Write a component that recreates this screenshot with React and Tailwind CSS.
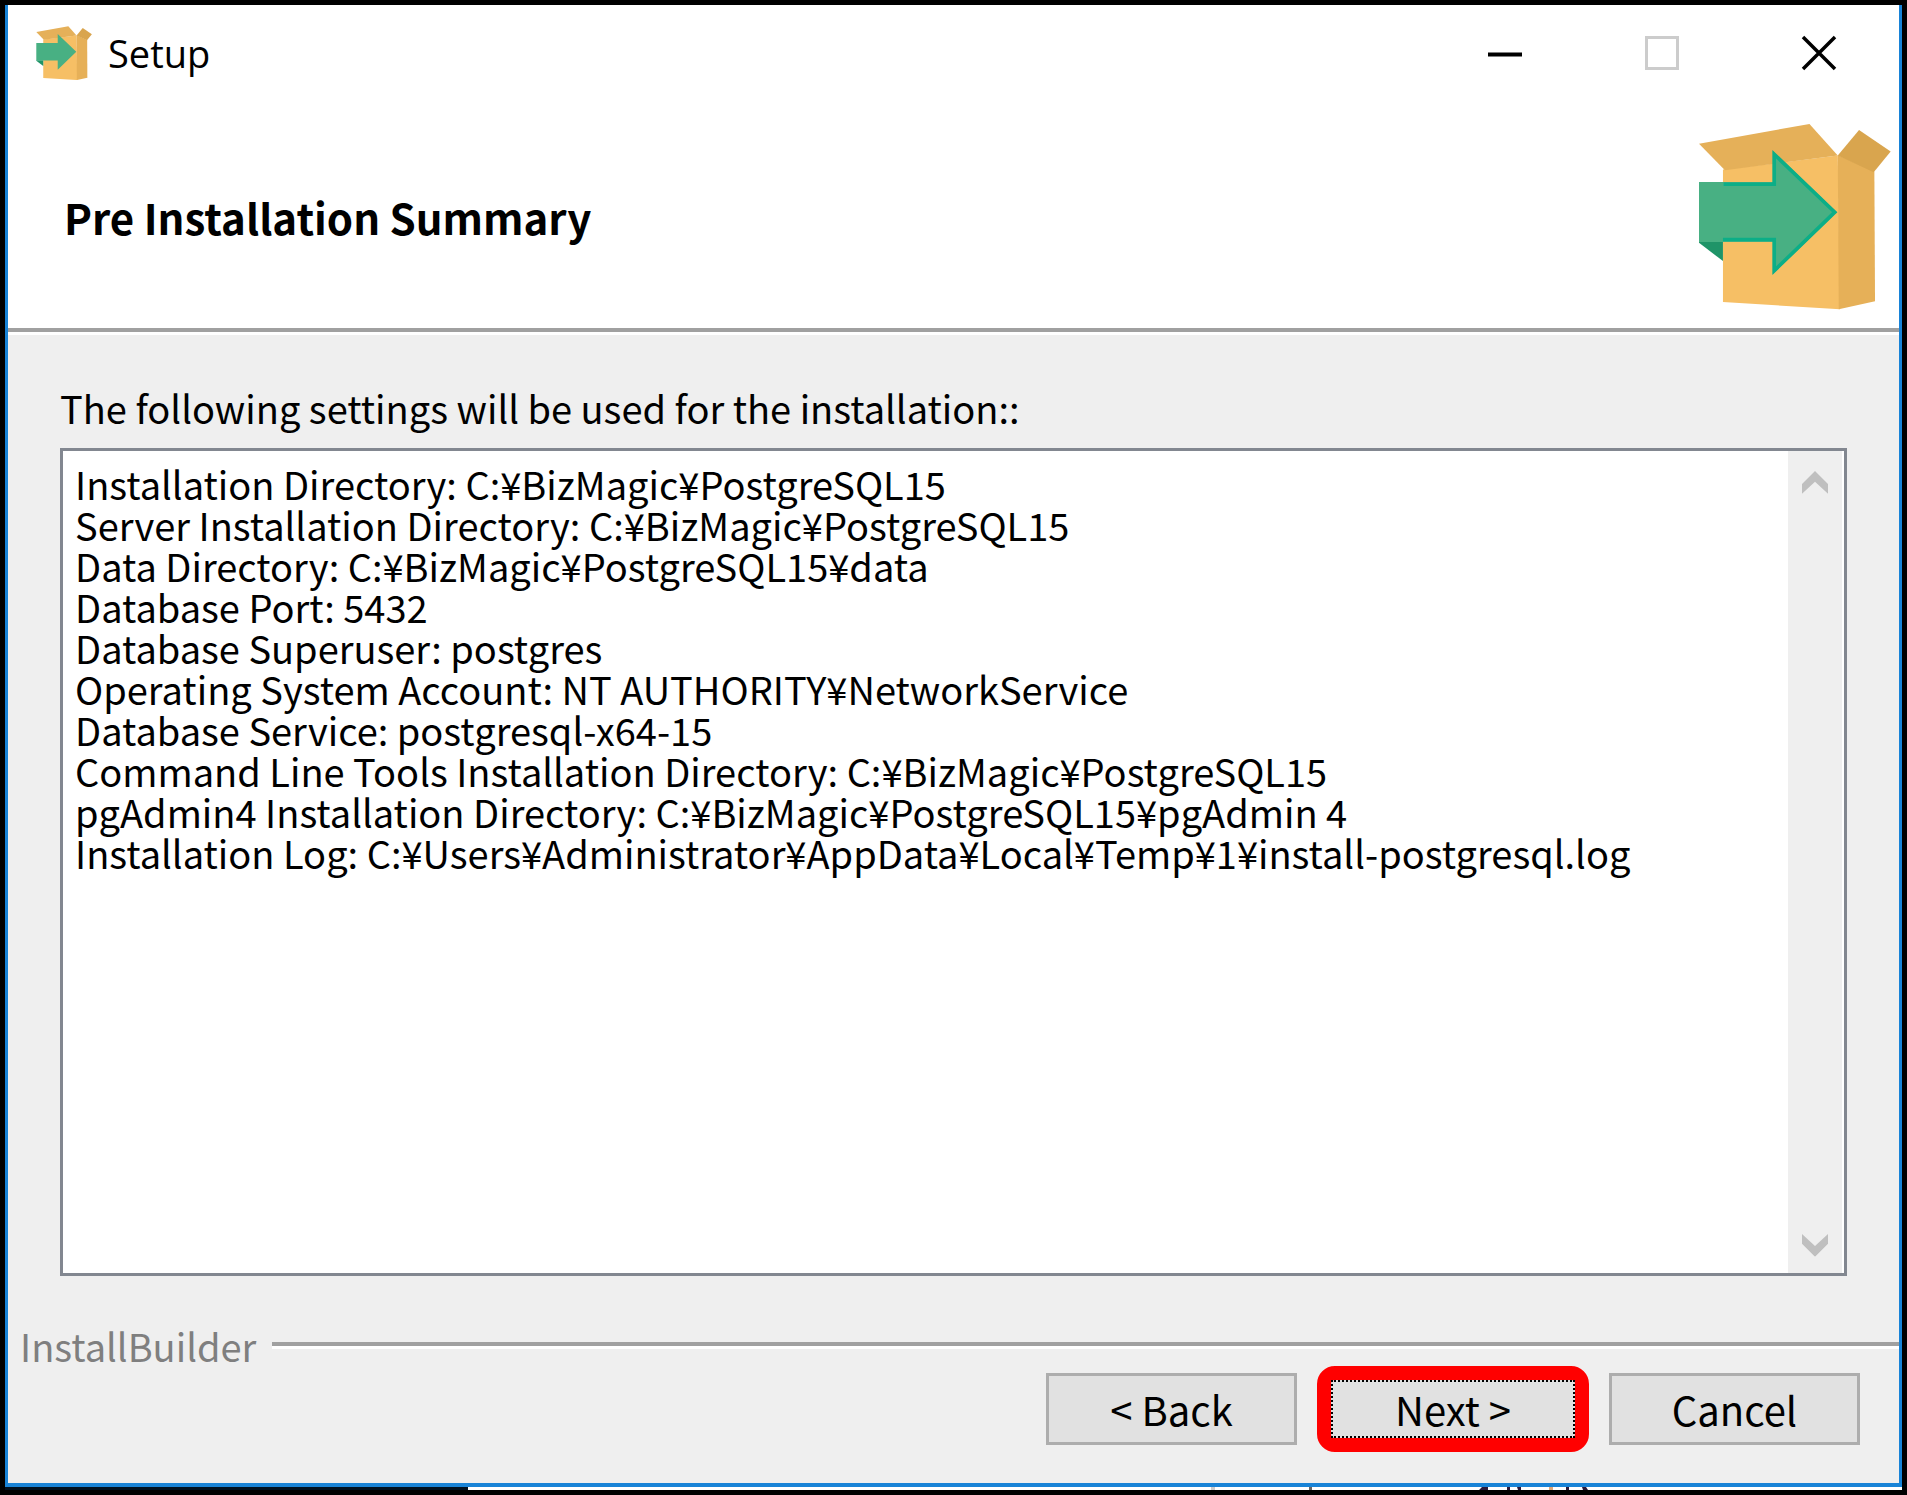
const summary = [
    "Installation Directory: C:¥BizMagic¥PostgreSQL15",
    "Server Installation Directory: C:¥BizMagic¥PostgreSQL15",
    "Data Directory: C:¥BizMagic¥PostgreSQL15¥data",
    "Database Port: 5432",
    "Database Superuser: postgres",
    "Operating System Account: NT AUTHORITY¥NetworkService",
    "Database Service: postgresql-x64-15",
    "Command Line Tools Installation Directory: C:¥BizMagic¥PostgreSQL15",
    "pgAdmin4 Installation Directory: C:¥BizMagic¥PostgreSQL15¥pgAdmin 4",
    "Installation Log: C:¥Users¥Administrator¥AppData¥Local¥Temp¥1¥install-postgresql.log",
];

function BoxLogo({ className, outline }) {
    return (
        <svg viewBox="745 372 580 563" className={className} aria-hidden="true">
            <path d="M820 512 L1165 470 L1172 932 L820 910 Z" fill="#f6bf65" />
            <path d="M1165 468 L1275 518 L1277 908 L1168 932 Z" fill="#e6b058" />
            <path d="M748 434 L1080 375 L1165 470 L826 514 Z" fill="#e5b059" />
            <path d="M1165 470 L1229 393 L1324 458 L1273 520 Z" fill="#d9a54e" />
            <path d="M748 728 L820 728 L820 787 L748 732 Z" fill="#1f9468" />
            <path d="M748 549 L970 549 L970 456 L1162 640 L970 826 L970 730 L748 730 Z" fill="#48b083" />
            {outline && (
                <path d="M822 556 L974 556 L974 466 L1156 640 L974 816 L974 722 L820 722" fill="none" stroke="#0cae87" strokeWidth="11" />
            )}
        </svg>
    )
}

function Chevron({ down }) {
    return (
        <svg viewBox="0 0 24 21" className={down ? "w-[26px] rotate-180" : "w-[26px]"} aria-hidden="true">
            <path d="M12 0 L24 12 V21 L12 10 L0 21 V12 Z" fill="#bfbfbf" />
        </svg>
    )
}

function TitleBar() {
    const control = "w-[157px] h-full flex justify-center items-center";

    return (
        <div className="h-24 pl-7 pr-[2px] flex items-center">
            <BoxLogo className="w-14" />
            <span className="pl-4 font-['Open_Sans',sans-serif] text-[38px]">Setup</span>
            <div className="ml-auto h-full flex">
                <button aria-label="Minimize" className={control}>
                    <svg viewBox="0 0 36 36" className="w-9"><path d="M1 19.500 H35" stroke="#000" strokeWidth="4" /></svg>
                </button>
                <button aria-label="Maximize" disabled className={control}>
                    <svg viewBox="0 0 36 36" className="w-9"><rect x="2.500" y="2.500" width="31" height="31" fill="none" stroke="#ccc" strokeWidth="3" /></svg>
                </button>
                <button aria-label="Close" className={control}>
                    <svg viewBox="0 0 36 36" className="w-9"><path d="M2 2 L34 34 M34 2 L2 34" stroke="#000" strokeWidth="3.500" /></svg>
                </button>
            </div>
        </div>
    )
}

// sliver of the desktop that shows below the window
function DesktopEdge() {
    return (
        <div className="h-[3px] flex justify-between">
            <div className="w-[463px] bg-[#00101f]" />
            <svg viewBox="0 0 700 3" className="w-[700px] h-[3px]" aria-hidden="true">
                <path d="M9 0 h4 v3 h-4 Z" fill="#ccc" />
                <path d="M107 0 h3 v3 h-3 Z" fill="#666" />
                <path d="M280 0 h6 v3 h-9 Z M305 0 h3 v3 h-3 Z M315 0 h4 v3 h-3 Z M364 0 h3 v3 h-3 Z M380 0 h4 l2 3 h-5 Z" fill="#2b1a3a" />
                <path d="M347 0 h4 v3 h-4 Z" fill="#e0a878" />
            </svg>
        </div>
    )
}

export default function App() {
    const button = "w-[251px] h-[72px] bg-[#e1e1e1] border-[3px] border-[#adadad] text-[40px] whitespace-pre";

    return (
        <div className="min-h-screen flex flex-col bg-white border-[5px] border-black text-black font-['Noto_Sans_CJK_JP',sans-serif] text-[38px] leading-[41px]">
            <main className="flex-1 flex flex-col border-x-[3px] border-b-4 border-[#1883d7]">
                <TitleBar />
                <header className="h-[231px] pt-1 pl-14 pr-2 flex justify-between items-center border-b-4 border-[#a0a0a0]">
                    <h1 className="font-bold text-[42px]">Pre Installation Summary</h1>
                    <BoxLogo className="w-[193px]" outline />
                </header>
                <div className="flex-1 flex flex-col bg-[#efefef] border-t-[3px] border-white">
                    <div className="flex-1 flex flex-col pt-[52px] px-[52px]">
                        <label htmlFor="summary">The following settings will be used for the installation::</label>
                        <div className="mt-5 flex-1 flex bg-white border-[3px] border-[#828790]">
                            <textarea id="summary" readOnly value={summary.join("\n")}
                                className="flex-1 pt-3 px-3 resize-none overflow-hidden whitespace-pre outline-none" />
                            <div className="w-[54px] mr-[2px] pt-5 pb-4 flex flex-col justify-between items-center bg-[#efefef]">
                                <button aria-label="Scroll up"><Chevron /></button>
                                <button aria-label="Scroll down"><Chevron down /></button>
                            </div>
                        </div>
                    </div>
                    <footer className="pt-[49px] pb-[31px]">
                        <div className="pl-3 flex items-center gap-4">
                            <span className="text-[#7f7f7f]">InstallBuilder</span>
                            <div className="flex-1 h-[7px] bg-white border-t-4 border-[#a0a0a0]" />
                        </div>
                        <div className="pr-[39px] flex justify-end items-center gap-5">
                            <button className={button}>{"< Back"}</button>
                            <button className="w-[272px] h-[86px] p-0 bg-[#e1e1e1] border-[14px] border-[#f00] rounded-[18px] text-[40px]">
                                <span className="h-full flex justify-center items-center border-2 border-dotted border-black whitespace-pre">{"Next >"}</span>
                            </button>
                            <button className={button}>Cancel</button>
                        </div>
                    </footer>
                </div>
            </main>
            <DesktopEdge />
        </div>
    )
}
